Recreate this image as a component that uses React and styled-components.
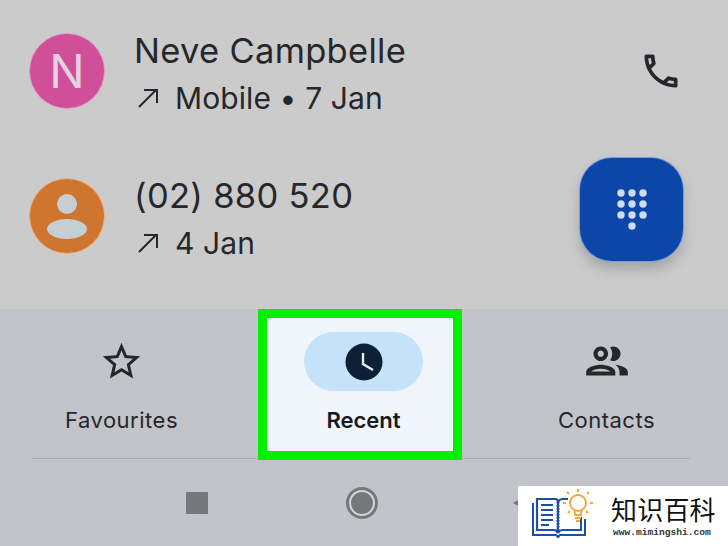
import React from "react";
import styled, { createGlobalStyle } from "styled-components";

const GlobalStyle = createGlobalStyle`
  html, body {
    margin: 0;
    padding: 0;
    overflow: hidden;
  }
  body {
    font-family: "Inter", "Liberation Sans", sans-serif;
  }
`;

const Screen = styled.div`
  position: relative;
  width: 728px;
  height: 546px;
  overflow: hidden;
  background-color: #c3c4c9;
  color: #25272a;
`;

const CallList = styled.div`
  position: relative;
  height: 309px;
  display: flex;
  flex-direction: column;
  gap: 4px;
  background-color: #cbcbcb;
`;

const CallRow = styled.div`
  height: 141px;
  display: flex;
  align-items: center;
  padding: 0 45px 0 30px;
`;

const Avatar = styled.div`
  width: 74px;
  height: 74px;
  flex: none;
  border-radius: 50%;
  display: flex;
  align-items: center;
  justify-content: center;
  background-color: ${(p) => p.$color};
  color: #e8d0e0;
  font-size: 47px;
  font-weight: 400;
  box-shadow: 0 0 0 1px ${(p) => p.$edge};
`;

const CallText = styled.div`
  flex: 1;
  margin-left: 31px;
  margin-top: 5px;
`;

const Name = styled.div`
  font-size: 34.5px;
  line-height: 42px;
  letter-spacing: 0.3px;
  margin-left: -1px;
`;

const Detail = styled.div`
  display: flex;
  align-items: center;
  font-size: 30px;
  line-height: 38px;
  margin-top: 7px;
  letter-spacing: 0.1px;
  svg {
    margin: 0 17px 0 3px;
  }
`;

const Fab = styled.div`
  position: absolute;
  left: 580px;
  top: 158px;
  width: 103px;
  height: 103px;
  border-radius: 32px;
  display: flex;
  align-items: center;
  justify-content: center;
  background-color: #0b46a8;
  box-shadow: 0 0 0 1px #7f9ad8, 0 8px 14px rgba(0, 0, 0, 0.2);
`;

const TabBar = styled.div`
  height: 149px;
  display: grid;
  grid-template-columns: 243px 242px 243px;
`;

const Tab = styled.div`
  display: flex;
  flex-direction: column;
  align-items: center;
  padding-top: 27px;
  box-sizing: border-box;
  font-size: 22px;
  letter-spacing: 0.5px;
`;

const ActiveTab = styled.div`
  justify-self: center;
  width: 204px;
  height: 151px;
  box-sizing: border-box;
  display: flex;
  flex-direction: column;
  align-items: center;
  padding-top: 14px;
  margin-left: -9px;
  background-color: #f0f4fb;
  border: 9px solid #00f000;
  font-size: 22px;
  font-weight: 600;
  color: #17191c;
  position: relative;
`;

const Pill = styled.div`
  width: 119px;
  height: 59px;
  margin-left: 8px;
  border-radius: 30px;
  display: flex;
  align-items: center;
  justify-content: center;
  background-color: #c4e3fa;
`;

const TabIcon = styled.div`
  height: 50px;
  display: flex;
  align-items: center;
  justify-content: center;
`;

const TabLabel = styled.div`
  margin-top: ${(p) => p.$gap}px;
  margin-left: ${(p) => p.$shift || 0}px;
  line-height: 28px;
`;

const Divider = styled.div`
  height: 1px;
  margin: 0 38px 0 32px;
  background-color: #abacb1;
`;

const NavBar = styled.div`
  display: flex;
  align-items: center;
  height: 87px;
  padding-left: 186px;
`;

const NavSquare = styled.div`
  width: 22px;
  height: 22px;
  border-radius: 1px;
  background-color: #76777b;
`;

const NavHome = styled.div`
  width: 22px;
  height: 22px;
  margin-left: 141px;
  border-radius: 50%;
  background-color: #76777b;
  border: 2px solid #d4d5d9;
  box-shadow: 0 0 0 3px #76777b;
`;

const NavBack = styled.div`
  width: 0;
  height: 0;
  margin-left: 138px;
  border-top: 8px solid transparent;
  border-bottom: 8px solid transparent;
  border-right: 14px solid #76777b;
`;

const Watermark = styled.div`
  position: absolute;
  right: 0;
  bottom: 0;
  width: 210px;
  height: 60px;
  box-sizing: border-box;
  display: flex;
  align-items: center;
  padding-left: 13px;
  background-color: #fff;
`;

const WatermarkText = styled.div`
  margin-left: 16px;
  display: flex;
  flex-direction: column;
`;

const WatermarkTitle = styled.div`
  font-family: "Noto Sans CJK SC", sans-serif;
  font-size: 26px;
  line-height: 32px;
  letter-spacing: 0.2px;
  color: #111;
`;

const WatermarkUrl = styled.div`
  font-family: "Liberation Mono", monospace;
  font-size: 9.6px;
  font-weight: 700;
  line-height: 12px;
  margin-top: 2px;
  margin-left: 2px;
  color: #333;
`;

const OutgoingArrow = () => (
  <svg width="20" height="20" viewBox="0 0 20 20" fill="none" stroke="#25272a" strokeWidth="2">
    <path d="M1 19 18 2M6 2h13v13" />
  </svg>
);

const PhoneIcon = () => (
  <svg width="44" height="44" viewBox="0 0 24 24" fill="#25272a">
    <path d="M6.54 5c.06.89.21 1.76.45 2.59l-1.2 1.2c-.41-1.2-.67-2.47-.76-3.79h1.51m9.86 12.02c.85.24 1.72.39 2.6.45v1.49c-1.32-.09-2.59-.35-3.8-.75l1.2-1.19M7.5 3H4c-.55 0-1 .45-1 1 0 9.39 7.61 17 17 17 .55 0 1-.45 1-1v-3.49c0-.55-.45-1-1-1-1.24 0-2.45-.2-3.57-.57-.1-.04-.21-.05-.31-.05-.26 0-.51.1-.71.29l-2.2 2.2c-2.83-1.45-5.15-3.76-6.59-6.59l2.2-2.2c.28-.28.36-.67.25-1.02C8.7 6.45 8.5 5.25 8.5 4c0-.55-.45-1-1-1z" />
  </svg>
);

const PersonGlyph = () => (
  <svg width="74" height="74" viewBox="0 0 74 74" fill="#c5ced3">
    <circle cx="37" cy="25" r="10" />
    <ellipse cx="37" cy="50" rx="20" ry="10" />
  </svg>
);

const DialpadIcon = () => {
  const dots = [
    [0, 0], [11, 0], [22, 0],
    [0, 11], [11, 11], [22, 11],
    [0, 22], [11, 22], [22, 22],
    [11, 33],
  ];
  return (
    <svg width="30" height="42" viewBox="-4 -4 30 42" fill="#cfdcf0">
      {dots.map(([x, y]) => (
        <circle key={`${x}-${y}`} cx={x} cy={y} r="3.7" />
      ))}
    </svg>
  );
};

const StarIcon = () => (
  <svg width="45" height="45" viewBox="0 0 24 24" fill="#25272a">
    <path d="M22 9.24l-7.19-.62L12 2 9.19 8.63 2 9.24l5.46 4.73L5.82 21 12 17.27 18.18 21l-1.63-7.03L22 9.24zM12 15.4l-3.76 2.27 1-4.28-3.32-2.88 4.38-.38L12 6.1l1.71 4.04 4.38.38-3.32 2.88 1 4.28L12 15.4z" />
  </svg>
);

const ContactsIcon = () => (
  <svg width="50" height="50" viewBox="0 0 24 24" fill="#25272a">
    <path d="M9 13.75c-2.34 0-7 1.17-7 3.5V19h14v-1.75c0-2.33-4.66-3.5-7-3.5zM4.34 17c.84-.58 2.87-1.25 4.66-1.25s3.82.67 4.66 1.25H4.34zM9 12c1.93 0 3.5-1.57 3.5-3.5S10.93 5 9 5 5.5 6.57 5.5 8.5 7.07 12 9 12zm0-5c.83 0 1.5.67 1.5 1.5S9.83 10 9 10s-1.5-.67-1.5-1.5S8.17 7 9 7zm7.04 6.81c1.16.84 1.96 1.96 1.96 3.44V19h4v-1.75c0-2.02-3.5-3.17-5.96-3.44zM15 12c1.93 0 3.5-1.57 3.5-3.5S16.93 5 15 5c-.54 0-1.04.13-1.5.35.63.89 1 1.98 1 3.15s-.37 2.26-1 3.15c.46.22.96.35 1.5.35z" />
  </svg>
);

const ClockIcon = () => (
  <svg width="38" height="38" viewBox="0 0 38 38">
    <circle cx="19" cy="19" r="18.5" fill="#0e2036" />
    <path d="M18 10v11l10 6" fill="none" stroke="#e4edf6" strokeWidth="2.4" />
  </svg>
);

const BookLogo = () => (
  <svg width="64" height="56" viewBox="0 -1 64 56" fill="none">
    <path d="M2 14v32h23l2 2 2-2h25V30" stroke="#1f4fa3" strokeWidth="2" />
    <path d="M6 10h18c2 0 3 1 3 3v31c-1-2-2-3-4-3H6z" stroke="#1f4fa3" strokeWidth="2.2" />
    <path d="M27 13c1-2 2-3 5-3h5M27 44c1-2 3-3 5-3h18V28" stroke="#1f4fa3" strokeWidth="2" />
    <path d="M10 16h12M10 21h12M10 26h12M10 31h12M10 36h8" stroke="#1f4fa3" strokeWidth="2" />
    <path d="M27 13v31" stroke="#1f4fa3" strokeWidth="3" strokeDasharray="1.5 1.5" />
    <circle cx="47" cy="14" r="8" stroke="#f2a93b" strokeWidth="2" />
    <path d="M43 21c1 2 1 3 1 5h6c0-2 0-3 1-5M44 29h6M45 32h4" stroke="#f2a93b" strokeWidth="2" />
    <path d="M47 0v3M36 3l2 2M58 3l-2 2M32 14h3M59 14h3M37 24l2-2M57 24l-2-2" stroke="#f2a93b" strokeWidth="2" />
  </svg>
);

const App = () => (
  <Screen>
    <GlobalStyle />
    <CallList>
      <CallRow>
        <Avatar $color="#cf4f98" $edge="#e795c4">N</Avatar>
        <CallText>
          <Name>Neve Campbelle</Name>
          <Detail>
            <OutgoingArrow />
            Mobile • 7 Jan
          </Detail>
        </CallText>
        <PhoneIcon />
      </CallRow>
      <CallRow>
        <Avatar $color="#cf7530" $edge="#e8b184">
          <PersonGlyph />
        </Avatar>
        <CallText>
          <Name>(02) 880 520</Name>
          <Detail>
            <OutgoingArrow />
            4 Jan
          </Detail>
        </CallText>
      </CallRow>
      <Fab>
        <DialpadIcon />
      </Fab>
    </CallList>
    <TabBar>
      <Tab>
        <TabIcon>
          <StarIcon />
        </TabIcon>
        <TabLabel $gap={20}>Favourites</TabLabel>
      </Tab>
      <ActiveTab>
        <Pill>
          <ClockIcon />
        </Pill>
        <TabLabel $gap={15} $shift={8}>Recent</TabLabel>
      </ActiveTab>
      <Tab>
        <TabIcon>
          <ContactsIcon />
        </TabIcon>
        <TabLabel $gap={20}>Contacts</TabLabel>
      </Tab>
    </TabBar>
    <Divider />
    <NavBar>
      <NavSquare />
      <NavHome />
      <NavBack />
    </NavBar>
    <Watermark>
      <BookLogo />
      <WatermarkText>
        <WatermarkTitle>知识百科</WatermarkTitle>
        <WatermarkUrl>www.mimingshi.com</WatermarkUrl>
      </WatermarkText>
    </Watermark>
  </Screen>
);

export default App;
